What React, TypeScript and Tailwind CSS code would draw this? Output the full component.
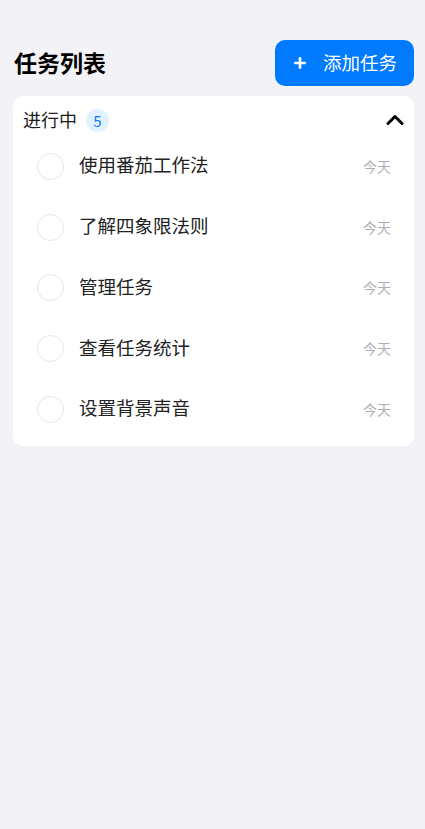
import { Plus, ChevronUp } from 'lucide-react'

const tasks = ['使用番茄工作法', '了解四象限法则', '管理任务', '查看任务统计', '设置背景声音']

export default function App() {
  return (
    <div
      className="min-h-[829px] bg-[#f2f2f7] text-[#1c1c1e]"
      style={{ fontFamily: '"Noto Sans CJK SC", "Noto Sans", sans-serif' }}
    >
      {/* HEADER */}
      <header className="flex items-center justify-between pl-[14px] pr-[11px] pt-[40px] pb-[10px]">
        <h1 className="text-[23px] font-bold leading-[30px] text-black -mt-[3px]">任务列表</h1>
        <button className="w-[139px] h-[46px] bg-[#007aff] rounded-[10px] text-white flex items-center justify-center gap-[15px] text-[18.5px]">
          <Plus size={16} strokeWidth={4} />
          <span>添加任务</span>
        </button>
      </header>

      <section className="ml-[13px] mr-[11px] bg-white rounded-[10px] pb-[7px]">
        <div className="h-[40px] pt-[9.5px] pl-[10px] pr-[5px] flex items-start justify-between">
          <div className="flex items-center h-[24px] mt-[1px]">
            <span className="text-[18px] leading-[24px]">进行中</span>
            <span className="ml-[9px] mt-[3px] w-[23px] h-[23px] rounded-full bg-[#e3f0ff] text-[#007aff] text-[15px] flex items-center justify-center leading-none">
              5
            </span>
          </div>
          <ChevronUp size={28} strokeWidth={2.6} className="text-black" />
        </div>

        {tasks.map((t) => (
          <div key={t} className="h-[60.7px] flex items-center pl-[24px] pr-[23px]">
            <div className="w-[27px] h-[27px] rounded-full border-[1.5px] border-[#e5e5ea] shrink-0" />
            <span className="ml-[15px] flex-1 text-[18.5px] text-[#222] -mt-[2px]">{t}</span>
            <span className="text-[14px] text-[#aeaeb2]">今天</span>
          </div>
        ))}
      </section>
    </div>
  )
}
